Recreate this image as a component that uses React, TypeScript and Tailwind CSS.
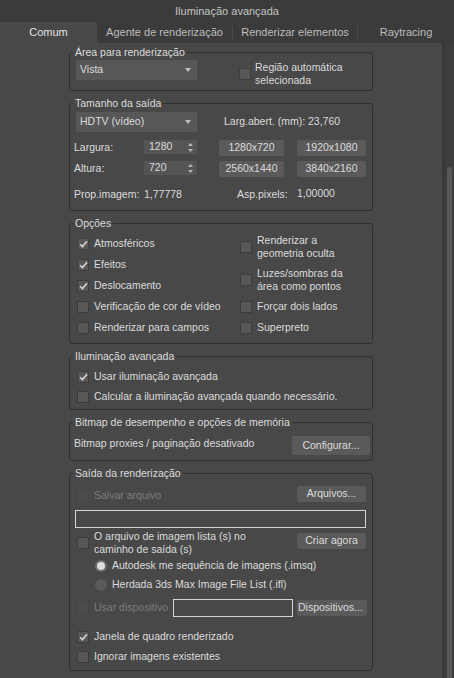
import type { ReactNode } from "react";

const FONT = "font-['Liberation_Sans',Arial,sans-serif]";

function Check({ checked = false, disabled = false }: { checked?: boolean; disabled?: boolean }) {
  return (
    <span
      className={
        disabled
          ? "flex h-[12px] w-[12px] shrink-0 items-center justify-center border border-[#454545] bg-[#4d4d4d]"
          : "flex h-[12px] w-[12px] shrink-0 items-center justify-center border border-[#3c3c3c] bg-[#575757]"
      }
    >
      {checked && (
        <svg width="9" height="8" viewBox="0 0 9 8">
          <path d="M1.2 4.2 L3.4 6.6 L8 1.2" stroke="#cfcfcf" strokeWidth="1.7" fill="none" />
        </svg>
      )}
    </span>
  );
}

function Radio({ on = false }: { on?: boolean }) {
  return on ? (
    <span className="flex h-[12px] w-[12px] shrink-0 items-center justify-center rounded-full bg-[#6d6d6d]">
      <span className="h-[8px] w-[8px] rounded-full bg-[#dedede]" />
    </span>
  ) : (
    <span className="h-[12px] w-[12px] shrink-0 rounded-full bg-[#5a5a5a]" />
  );
}

function Btn({ children, className = "" }: { children: ReactNode; className?: string }) {
  return (
    <div
      className={`flex shrink-0 items-center justify-center rounded-[2px] bg-[#5a5a5a] text-[#dcdcdc] ${className}`}
    >
      {children}
    </div>
  );
}

function Group({ title, className = "", children }: { title: string; className?: string; children: ReactNode }) {
  return (
    <fieldset className={`w-[304px] rounded-[3px] border border-[#2f2f2f] ${className}`}>
      <legend className="ml-[3px] px-[2px] leading-[14px] text-[#dcdcdc]">{title}</legend>
      {children}
    </fieldset>
  );
}

function Row({ children, checked = false }: { children: ReactNode; checked?: boolean }) {
  return (
    <div className="flex h-[21px] items-center gap-[5px]">
      <Check checked={checked} />
      <span>{children}</span>
    </div>
  );
}

function Drop({ label }: { label: string }) {
  return (
    <div className="ml-[6px] flex h-[20px] w-[121px] shrink-0 items-center justify-between bg-[#575757] pl-[4px] pr-[6px]">
      <span>{label}</span>
      <svg width="6" height="4" viewBox="0 0 6 4">
        <path d="M0 0 H6 L3 4 Z" fill="#bdbdbd" />
      </svg>
    </div>
  );
}

function Spin({ value }: { value: string }) {
  return (
    <div className="flex h-[14px] w-[53px] shrink-0 items-center justify-between self-start bg-[#555555] pl-[5px] pr-[4px]">
      <span>{value}</span>
      <svg width="5" height="9" viewBox="0 0 5 9">
        <path d="M0 3 L2.5 0 L5 3 Z M0 6 H5 L2.5 9 Z" fill="#b8b8b8" />
      </svg>
    </div>
  );
}

export default function App() {
  return (
    <div className={`flex h-[678px] w-[454px] flex-col overflow-hidden bg-[#484848] text-[10.5px] text-[#dcdcdc] ${FONT}`}>
      <div className="flex h-[22px] shrink-0 items-center justify-center bg-[#3b3b3b] text-[11px] text-[#c4c4c4]">
        Iluminação avançada
      </div>

      <div className="flex h-[21px] shrink-0 bg-[#3b3b3b] text-[11px] text-[#bdbdbd]">
        <div className="flex w-[97px] items-center justify-center bg-[#484848] text-[#e2e2e2]">Comum</div>
        <div className="flex w-[135px] items-center justify-center">Agente de renderização</div>
        <div className="my-[4px] w-px bg-[#4c4c4c]" />
        <div className="flex w-[124px] items-center justify-center">Renderizar elementos</div>
        <div className="my-[4px] w-px bg-[#4c4c4c]" />
        <div className="flex flex-1 items-center justify-center">Raytracing</div>
      </div>

      <div className="flex min-h-0 flex-1">
        <div className="flex flex-1 flex-col pl-[69px] pt-[2px]">
          {/* Área para renderização */}
          <Group title="Área para renderização" className="pb-[3px]">
            <div className="flex items-start">
              <div className="mt-[1px]">
                <Drop label="Vista" />
              </div>
              <div className="ml-[42px] mt-[2px] flex items-center gap-[4px]">
                <Check />
                <span className="leading-[13px]">
                  Região automática
                  <br />
                  selecionada
                </span>
              </div>
            </div>
          </Group>

          {/* Tamanho da saída */}
          <Group title="Tamanho da saída" className="mt-[5px] pb-[8px]">
            <div className="mt-[2px] flex h-[20px] items-center">
              <Drop label="HDTV (vídeo)" />
              <span className="ml-[27px]">Larg.abert. (mm): 23,760</span>
            </div>
            <div className="mt-[8px] flex h-[16px] items-center">
              <span className="ml-[4px] w-[70px]">Largura:</span>
              <Spin value="1280" />
              <Btn className="ml-[22px] h-[16px] w-[65px]">1280x720</Btn>
              <Btn className="ml-[13px] h-[16px] w-[69px]">1920x1080</Btn>
            </div>
            <div className="mt-[5px] flex h-[16px] items-center">
              <span className="ml-[4px] w-[70px]">Altura:</span>
              <Spin value="720" />
              <Btn className="ml-[22px] h-[16px] w-[65px]">2560x1440</Btn>
              <Btn className="ml-[13px] h-[16px] w-[69px]">3840x2160</Btn>
            </div>
            <div className="mt-[11px] flex h-[14px] items-center">
              <span className="ml-[4px] w-[70px]">Prop.imagem:</span>
              <span className="w-[93px]">1,77778</span>
              <span className="w-[60px]">Asp.pixels:</span>
              <span className="-mt-[2px]">1,00000</span>
            </div>
          </Group>

          {/* Opções */}
          <Group title="Opções" className="mt-[5px] pb-[5px]">
            <div className="flex">
              <div className="ml-[7px] w-[163px] pt-[3px]">
                <Row checked>Atmosféricos</Row>
                <Row checked>Efeitos</Row>
                <Row checked>Deslocamento</Row>
                <Row>Verificação de cor de vídeo</Row>
                <Row>Renderizar para campos</Row>
              </div>
              <div className="flex flex-col pt-[4px]">
                <div className="flex h-[26px] items-center gap-[5px]">
                  <Check />
                  <span className="leading-[13px]">
                    Renderizar a
                    <br />
                    geometria oculta
                  </span>
                </div>
                <div className="mt-[7px] flex h-[26px] items-center gap-[5px]">
                  <Check />
                  <span className="leading-[13px]">
                    Luzes/sombras da
                    <br />
                    área como pontos
                  </span>
                </div>
                <div className="mt-[3px]">
                  <Row>Forçar dois lados</Row>
                  <Row>Superpreto</Row>
                </div>
              </div>
            </div>
          </Group>

          {/* Iluminação avançada */}
          <Group title="Iluminação avançada" className="mt-[5px] pb-[2px]">
            <div className="ml-[7px] flex flex-col pt-[4px] [&>div]:h-[20px]">
              <Row checked>Usar iluminação avançada</Row>
              <Row>Calcular a iluminação avançada quando necessário.</Row>
            </div>
          </Group>

          {/* Bitmap */}
          <Group title="Bitmap de desempenho e opções de memória" className="mt-[5px] pb-[5px]">
            <div className="mt-[7px] flex h-[19px] items-center">
              <span className="ml-[4px] -mt-[3px]">Bitmap proxies / paginação desativado</span>
              <Btn className="ml-auto mr-[2px] h-[19px] w-[78px]">Configurar...</Btn>
            </div>
          </Group>

          {/* Saída da renderização */}
          <Group title="Saída da renderização" className="mt-[5px] pb-[3px]">
            <div className="mt-[6px] flex items-start">
              <div className="ml-[7px] mt-[2px] flex h-[16px] items-center gap-[5px] text-[#7c7c7c]">
                <Check disabled />
                <span>Salvar arquivo</span>
              </div>
              <Btn className="ml-auto mr-[6px] h-[16px] w-[69px]">Arquivos...</Btn>
            </div>
            <div className="ml-[5px] mt-[6px] h-[18px] w-[291px] border border-[#d4d4d4]" />
            <div className="mt-[2px] flex items-start">
              <div className="ml-[7px] flex h-[26px] items-center gap-[5px]">
                <Check />
                <span className="leading-[13px]">
                  O arquivo de imagem lista (s) no
                  <br />
                  caminho de saída (s)
                </span>
              </div>
              <Btn className="ml-auto mr-[6px] mt-[3px] h-[16px] w-[69px]">Criar agora</Btn>
            </div>
            <div className="ml-[25px] mt-[1px] flex h-[18px] items-center gap-[5px]">
              <Radio on />
              <span>Autodesk me sequência de imagens (.imsq)</span>
            </div>
            <div className="ml-[25px] mt-[1px] flex h-[18px] items-center gap-[5px]">
              <Radio />
              <span>Herdada 3ds Max Image File List (.ifl)</span>
            </div>
            <div className="mt-[5px] flex h-[18px] items-center">
              <div className="ml-[7px] flex w-[96px] items-center gap-[5px] text-[#7c7c7c]">
                <Check disabled />
                <span>Usar dispositivo</span>
              </div>
              <div className="h-[18px] w-[120px] border border-[#d4d4d4]" />
              <Btn className="ml-[4px] h-[16px] w-[70px] !justify-start pl-[1px]">Dispositivos...</Btn>
            </div>
            <div className="ml-[7px] mt-[10px] [&>div]:h-[20px]">
              <Row checked>Janela de quadro renderizado</Row>
              <Row>Ignorar imagens existentes</Row>
            </div>
          </Group>
        </div>

        {/* scrollbar */}
        <div className="flex w-[12px] shrink-0">
          <div className="w-[3px] bg-[#383838]" />
          <div className="flex flex-1 flex-col bg-[#3e3e3e] px-[1px]">
            <div className="ml-[1px] mr-[1px] mt-[124px] flex-1 rounded-t-[2px] bg-[#575757]" />
          </div>
        </div>
      </div>
    </div>
  );
}
